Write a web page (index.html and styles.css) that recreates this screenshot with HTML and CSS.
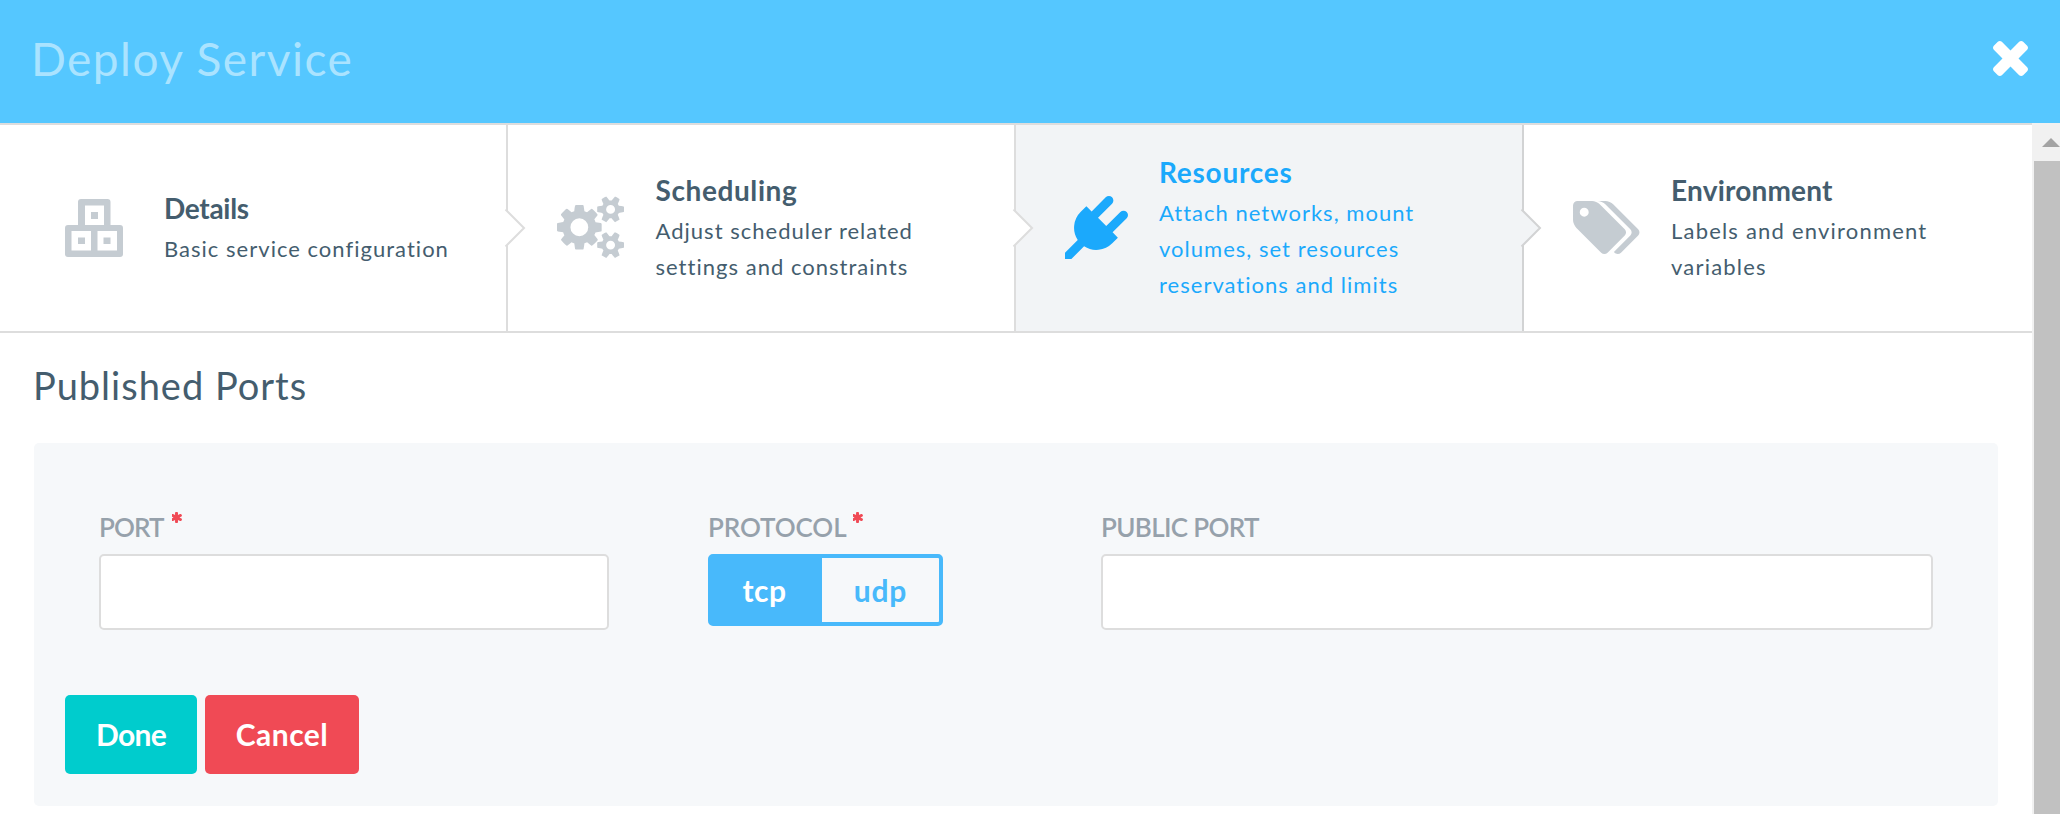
FILE: index.html
```html
<!DOCTYPE html>
<html lang="en">
<head>
<meta charset="utf-8">
<title>Deploy Service</title>
<link rel="stylesheet" href="styles.css">
</head>
<body>
<svg class="defs" aria-hidden="true">
  <symbol id="asterisk" viewBox="244 128 1304 1536" preserveAspectRatio="none"><path d="M1482 1050q46 26 59.500 77.500t-12.500 97.500l-64 110q-26 46-77.500 59.500t-97.500-12.500l-266-153v307q0 52-38 90t-90 38h-128q-52 0-90-38t-38-90v-307l-266 153q-46 26-97.500 12.500t-77.500-59.500l-64-110q-26-46-12.500-97.500t59.500-77.500l266-154-266-154q-46-26-59.500-77.500t12.500-97.500l64-110q26-46 77.500-59.500t97.500 12.500l266 153v-307q0-52 38-90t90-38h128q52 0 90 38t38 90v307l266-153q46-26 97.500-12.500t77.500 59.500l64 110q26 46 12.500 97.500t-59.500 77.500l-266 154z"/></symbol>
  <symbol id="chevron" viewBox="0 0 22 42"><path d="M1.500 2.500 20 21 1.500 39.500"/></symbol>
</svg>
<header class="header">
  <h1 class="header-title">Deploy Service</h1>
  <button class="close" aria-label="Close"><svg width="35" height="35" viewBox="302 366 1188 1188"><path d="M1490 1322q0 40-28 68l-136 136q-28 28-68 28t-68-28l-294-294-294 294q-28 28-68 28t-68-28l-136-136q-28-28-28-68t28-68l294-294-294-294q-28-28-28-68t28-68l136-136q28-28 68-28t68 28l294 294 294-294q28-28 68-28t68 28l136 136q28 28 28 68t-28 68l-294 294 294 294q28 28 28 68z"/></svg></button>
</header>
<div class="body">
  <main class="content">
    <nav class="steps">
      <a class="step step-details">
        <svg class="step-icon" width="58" height="58" viewBox="0 0 58 58"><path fill-rule="evenodd" d="M16 0h26.500a3 3 0 0 1 3 3v23H55a3 3 0 0 1 3 3v26a3 3 0 0 1-3 3H3a3 3 0 0 1-3-3V29a3 3 0 0 1 3-3h10V3a3 3 0 0 1 3-3zM20 6.500V26h19V6.500zM6.500 32v19.500H26V32zM32.500 32v19.500H52V32zM26 13h7v7h-7zM13 38.500h7V45h-7zM38.500 38.500h7V45h-7z"/></svg>
        <div class="step-text"><h2 class="step-title">Details</h2><p class="step-desc">Basic service configuration</p></div>
        <svg class="chevron"><use href="#chevron"/></svg>
      </a>
      <a class="step step-scheduling">
        <svg class="step-icon" width="67" height="62.500" viewBox="0 0 1920 1792"><path d="M896 896q0-106-75-181t-181-75-181 75-75 181 75 181 181 75 181-75 75-181zm768 512q0-52-38-90t-90-38-90 38-38 90q0 53 37.500 90.500t90.500 37.500 90.500-37.500 37.500-90.500zm0-1024q0-52-38-90t-90-38-90 38-38 90q0 53 37.500 90.500t90.500 37.500 90.500-37.500 37.500-90.500zm-384 421v185q0 10-7 19.500t-16 10.500l-155 24q-11 35-32 76 34 48 90 115 7 11 7 20 0 12-7 19-23 30-82.500 89.500t-78.500 59.500q-11 0-21-7l-115-90q-37 19-77 31-11 108-23 155-7 24-30 24h-186q-11 0-20-7.500t-10-17.500l-23-153q-34-10-75-31l-118 89q-7 7-20 7-11 0-21-8-144-133-144-160 0-9 7-19 10-14 41-53t47-61q-23-44-35-82l-152-24q-10-1-17-9.500t-7-19.500v-185q0-10 7-19.500t16-10.500l155-24q11-35 32-76-34-48-90-115-7-11-7-20 0-12 7-20 22-30 82-89t79-59q11 0 21 7l115 90q34-18 77-32 11-108 23-154 7-24 30-24h186q11 0 20 7.500t10 17.500l23 153q34 10 75 31l118-89q8-7 20-7 11 0 21 8 144 133 144 160 0 8-7 19-12 16-42 54t-45 60q23 48 34 82l152 23q10 2 17 10.500t7 19.500zm640 533v140q0 16-149 31-12 27-30 52 51 113 51 138 0 4-4 7-122 71-124 71-8 0-46-47t-52-68q-20 2-30 2t-30-2q-14 21-52 68t-46 47q-2 0-124-71-4-3-4-7 0-25 51-138-18-25-30-52-149-15-149-31v-140q0-16 149-31 13-29 30-52-51-113-51-138 0-4 4-7 4-2 35-20t59-34 30-16q8 0 46 46.500t52 67.500q20-2 30-2t30 2q51-71 92-112l6-2q4 0 124 70 4 3 4 7 0 25-51 138 17 23 30 52 149 15 149 31zm0-1024v140q0 16-149 31-12 27-30 52 51 113 51 138 0 4-4 7-122 71-124 71-8 0-46-47t-52-68q-20 2-30 2t-30-2q-14 21-52 68t-46 47q-2 0-124-71-4-3-4-7 0-25 51-138-18-25-30-52-149-15-149-31v-140q0-16 149-31 13-29 30-52-51-113-51-138 0-4 4-7 4-2 35-20t59-34 30-16q8 0 46 46.500t52 67.500q20-2 30-2t30 2q51-71 92-112l6-2q4 0 124 70 4 3 4 7 0 25-51 138 17 23 30 52 149 15 149 31z"/></svg>
        <div class="step-text"><h2 class="step-title">Scheduling</h2><p class="step-desc">Adjust scheduler related<br>settings and constraints</p></div>
        <svg class="chevron"><use href="#chevron"/></svg>
      </a>
      <a class="step step-resources active">
        <svg class="step-icon" width="63" height="63" viewBox="0 0 1792 1792"><path d="M1755 453q37 38 37 90.500t-37 90.500l-401 400 150 150-160 160q-163 163-389.500 186.500t-411.500-100.500l-362 362h-181v-181l362-362q-124-185-100.500-411.500t186.500-389.500l160-160 150 150 400-401q38-37 91-37t90 37 37 90.500-37 90.500l-400 401 234 234 401-400q38-37 91-37t90 37z"/></svg>
        <div class="step-text"><h2 class="step-title">Resources</h2><p class="step-desc">Attach networks, mount<br>volumes, set resources<br>reservations and limits</p></div>
        <svg class="chevron"><use href="#chevron"/></svg>
      </a>
      <a class="step step-environment">
        <svg class="step-icon" width="66.500" height="53" viewBox="0 128 1899 1515"><path d="M448 448q0-53-37.500-90.500t-90.500-37.500-90.500 37.500-37.500 90.500 37.500 90.500 90.500 37.500 90.500-37.500 37.500-90.500zm1067 576q0 53-37 90l-491 492q-39 37-91 37-53 0-90-37l-715-716q-38-37-64.500-101t-26.500-117v-416q0-52 38-90t90-38h416q53 0 117 26.500t102 64.500l715 714q37 39 37 91zm384 0q0 53-37 90l-491 492q-39 37-91 37-36 0-59-14t-53-45l470-470q37-37 37-90 0-52-37-91l-715-714q-38-38-102-64.500t-117-26.500h224q53 0 117 26.500t102 64.500l715 714q37 39 37 91z"/></svg>
        <div class="step-text"><h2 class="step-title">Environment</h2><p class="step-desc">Labels and environment<br>variables</p></div>
      </a>
    </nav>
    <section class="ports">
      <h2 class="ports-title">Published Ports</h2>
      <div class="panel">
        <div class="fields">
          <div class="field">
            <label class="label label-port" for="port">PORT<svg class="required"><use href="#asterisk"/></svg></label>
            <input class="input" id="port" type="text">
          </div>
          <div class="field">
            <div class="label label-protocol">PROTOCOL<svg class="required"><use href="#asterisk"/></svg></div>
            <div class="toggle"><button class="option selected">tcp</button><button class="option">udp</button></div>
          </div>
          <div class="field field-public">
            <label class="label label-public" for="public-port">PUBLIC PORT</label>
            <input class="input" id="public-port" type="text">
          </div>
        </div>
        <div class="actions"><button class="btn done">Done</button><button class="btn cancel">Cancel</button></div>
      </div>
    </section>
  </main>
  <div class="scrollbar"><div class="scroll-up"><svg width="18" height="9" viewBox="0 0 18 9"><path d="M9 0 18 9H0z"/></svg></div><div class="thumb"></div></div>
</div>
</body>
</html>
```
FILE: styles.css
```css
* { box-sizing: border-box; }
body {
  margin: 0;
  height: 814px;
  overflow: hidden;
  display: flex;
  flex-direction: column;
  background: #fff;
  color: #445d6e;
  font-family: Lato, "Open Sans", sans-serif;
}
h1, h2, p { margin: 0; }
button { border: 0; padding: 0; background: none; font-family: inherit; }
svg { display: block; fill: currentColor; flex: none; }
.defs { position: absolute; width: 0; height: 0; }

.header {
  height: 123px;
  flex: none;
  display: flex;
  align-items: center;
  justify-content: space-between;
  padding: 0 32px 7px 31px;
  background: #55c7ff;
}
.header-title {
  font-size: 46px;
  font-weight: 400;
  letter-spacing: 1.46px;
  color: #aae3ff;
}
.close { color: #fff; }

.body { flex: 1; display: flex; min-height: 0; }
.content { flex: 1; }

.steps {
  display: grid;
  grid-template-columns: repeat(4, 508px);
  height: 210px;
  border-top: 2px solid #ddd;
  border-bottom: 2px solid #ddd;
}
.step {
  position: relative;
  display: flex;
  align-items: center;
  border-right: 2px solid #ddd;
}
.step-details { padding-left: 65px; gap: 41px; }
.step-scheduling { padding-left: 49px; gap: 31.5px; }
.step-resources { padding-left: 49px; gap: 31px; }
.step-environment { padding-left: 49px; gap: 31.5px; border-right: 0; }
.step-icon { color: #c5ccd2; }
.step-scheduling .step-icon, .step-resources .step-icon, .step-environment .step-icon { margin-bottom: 2px; }
.step-title {
  font-size: 28px;
  font-weight: 700;
  line-height: 34px;
  margin-bottom: 6px;
}
.step-details .step-title { letter-spacing: -0.3px; }
.step-scheduling .step-title { letter-spacing: 0.6px; }
.step-resources .step-title { letter-spacing: 0.75px; }
.step-environment .step-title { letter-spacing: 0.2px; }
.step-desc {
  font-size: 22px;
  line-height: 36px;
  letter-spacing: 1.02px;
  white-space: nowrap;
}
.step-text { padding-top: 1px; }
.step-environment .step-desc { letter-spacing: 1.2px; }
.active { background: #f2f4f6; border-right-color: #d2d3d4; color: #1ba9fc; }
.active .step-icon { color: #1ba9fc; }
.chevron {
  position: absolute;
  z-index: 1;
  top: 82px;
  right: -20px;
  width: 22px;
  height: 42px;
  fill: #fff;
  stroke: #ddd;
  stroke-width: 2;
}
.active .chevron { fill: #f2f4f6; stroke: #d2d3d4; }

.ports { padding: 29px 34px 0; }
.ports-title {
  font-size: 38px;
  font-weight: 400;
  line-height: 46px;
  letter-spacing: 1px;
  text-indent: -1px;
  margin-bottom: 35px;
}
.panel {
  height: 363px;
  padding: 69px 31px 0;
  border-radius: 5px;
  background: #f6f8fa;
}
.fields {
  display: grid;
  grid-template-columns: 510px 235px 832px;
  column-gap: 99px;
  padding-left: 34px;
}
.field-public { width: 832px; margin-left: 59px; }
.label {
  display: flex;
  height: 30px;
  margin-bottom: 12px;
  font-size: 26px;
  font-weight: 600;
  line-height: 30px;
  color: #96a1ab;
}
.label-port { letter-spacing: -0.95px; }
.label-protocol { letter-spacing: -0.1px; }
.label-public { letter-spacing: -0.64px; }
.required { width: 10px; height: 11px; margin-left: 7px; color: #f04a55; }
.label-port .required { margin-left: 8.5px; }
.input {
  display: block;
  width: 100%;
  height: 76px;
  border: 2px solid #ddd;
  border-radius: 5px;
  background: #fff;
  outline: 0;
}
.toggle {
  display: flex;
  height: 72px;
  border: 4px solid #48b9fb;
  border-radius: 5px;
}
.option {
  flex: 1;
  font-size: 30px;
  font-weight: 700;
  letter-spacing: 0.8px;
  color: #48b9fb;
}
.selected {
  flex: 0 0 110px;
  letter-spacing: 0.5px;
  padding-right: 5px;
  background: #48b9fb;
  color: #fff;
}
.actions { display: flex; gap: 8px; margin-top: 65px; }
.btn {
  height: 79px;
  padding-bottom: 1px;
  border-radius: 5px;
  color: #fff;
  font-size: 30px;
  font-weight: 700;
}
.done { width: 132px; letter-spacing: -0.7px; background: #00cccd; }
.cancel { width: 154px; letter-spacing: 0.5px; background: #f04a55; }

.scrollbar {
  width: 28px;
  display: flex;
  flex-direction: column;
  background: #f1f1f1;
  overflow: hidden;
}
.scroll-up { height: 38px; padding: 15px 0 0 10px; color: #a3a3a3; }
.thumb { flex: 1; margin-left: 2px; background: #c1c1c1; }
```
